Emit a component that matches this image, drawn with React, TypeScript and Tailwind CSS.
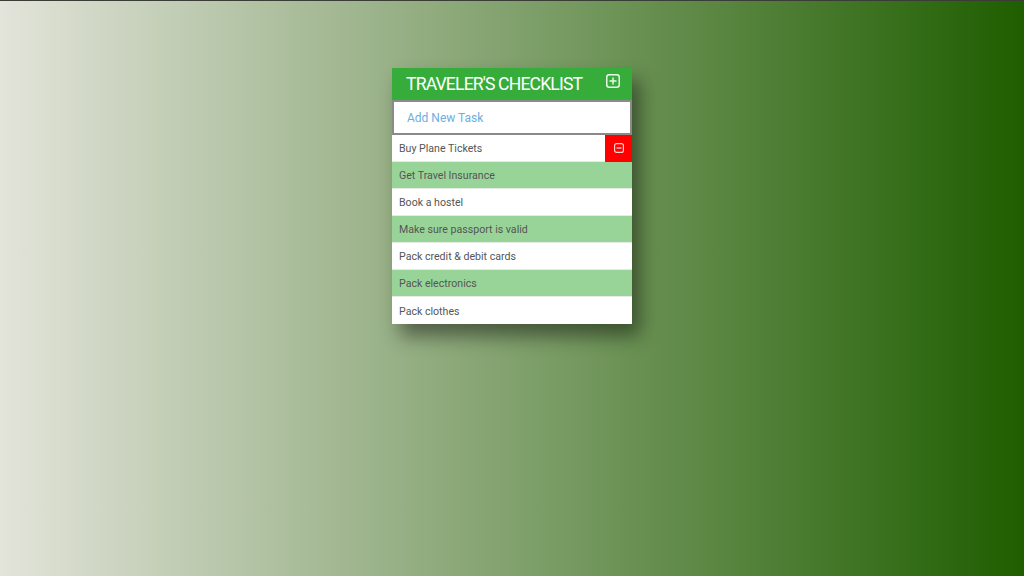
import React from "react";

const tasks = [
  "Buy Plane Tickets",
  "Get Travel Insurance",
  "Book a hostel",
  "Make sure passport is valid",
  "Pack credit & debit cards",
  "Pack electronics",
  "Pack clothes",
];

export default function App() {
  return (
    <div
      className="w-[1024px] h-[576px] border-t border-[#3a3d36] bg-[linear-gradient(to_right,#e3e4da,#1f5e00)] flex justify-center"
      style={{ fontFamily: "Roboto, 'Liberation Sans', sans-serif" }}
    >
      <div className="mt-[67px] w-[240px] self-start shadow-[8px_12px_18px_rgba(0,0,0,0.45)]">
        <div className="h-[32px] bg-[#36ad3a] flex items-center justify-between pl-[14px] pr-[12px]">
          <h1 className="text-white text-[17.6px] leading-none tracking-[-0.85px] mt-[2px]">TRAVELER'S CHECKLIST</h1>
          <svg width="14" height="14" viewBox="0 0 14 14" className="-mt-[6px]">
            <rect x="0.75" y="0.75" width="12.5" height="12.5" rx="2.5" fill="none" stroke="#e8f7e8" strokeWidth="1.5" />
            <path d="M7 3.5v7M3.5 7h7" stroke="#e8f7e8" strokeWidth="1.5" />
          </svg>
        </div>
        <div className="h-[35px] bg-white border-2 border-[#8a8a8a] flex items-center pl-[13px]">
          <span className="text-[12px] text-[#6eaee0] mt-[1px]">Add New Task</span>
        </div>
        {tasks.map((t, i) => (
          <div
            key={t}
            className={`h-[27px] flex items-center ${i < tasks.length - 1 ? "border-b border-[#e4ece4]" : "h-[26px]"} ${i % 2 === 1 ? "bg-[#98d498]" : "bg-white"}`}
          >
            <span className="flex-1 pl-[7px] text-[10.6px] text-[#555555] mt-[2px]">{t}</span>
            {i === 0 && (
              <div className="w-[27px] h-[27px] bg-[#ff0000] flex items-center justify-center">
                <svg width="10" height="10" viewBox="0 0 10 10">
                  <rect x="0.6" y="0.6" width="8.8" height="8.8" rx="2" fill="none" stroke="#ffd0d0" strokeWidth="1.2" />
                  <path d="M2.5 5h5" stroke="#ffd0d0" strokeWidth="1.3" />
                </svg>
              </div>
            )}
          </div>
        ))}
      </div>
    </div>
  );
}
